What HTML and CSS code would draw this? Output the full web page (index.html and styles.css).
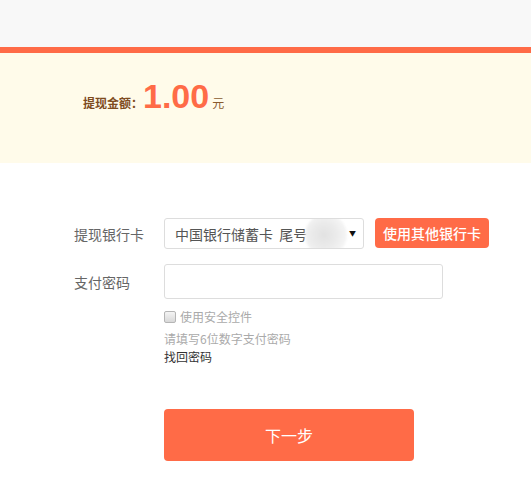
FILE: index.html
```html
<!DOCTYPE html>
<html lang="zh-CN">
<head>
<meta charset="utf-8">
<title>提现</title>
<link rel="stylesheet" href="styles.css">
</head>
<body>
<div class="top"></div>
<div class="bar"></div>
<section class="amount">
  <span class="amount-label">提现金额：</span>
  <span class="amount-num">1.00</span>
  <span class="amount-unit">元</span>
</section>
<section class="form">
  <div class="row row-card">
    <label class="label">提现银行卡</label>
    <div class="select">
      <span class="select-text">中国银行储蓄卡&nbsp;&nbsp;尾号</span>
      <span class="blur"></span>
      <span class="arrow">▼</span>
    </div>
    <button class="btn-other" type="button">使用其他银行卡</button>
  </div>
  <div class="row row-pwd">
    <label class="label">支付密码</label>
    <input class="pwd" type="password">
  </div>
  <div class="sub">
    <label class="check-line"><input class="check" type="checkbox"><span>使用安全控件</span></label>
    <div class="tip">请填写6位数字支付密码</div>
    <a class="find" href="#">找回密码</a>
    <button class="btn-next" type="button">下一步</button>
  </div>
</section>
</body>
</html>
```
FILE: styles.css
```css
html, body {
  margin: 0;
  padding: 0;
  background: #fff;
  font-family: "Noto Sans CJK SC", "Liberation Sans", sans-serif;
}
.top {
  height: 47px;
  background: #f8f8f8;
}
.bar {
  height: 6px;
  background: #ff6b47;
}
.amount {
  height: 110px;
  box-sizing: border-box;
  background: #fffbea;
  padding: 26px 0 0 83px;
  display: flex;
  align-items: baseline;
}
.amount-label {
  font-size: 12px;
  font-weight: bold;
  color: #7e4b1e;
  line-height: 34px;
}
.amount-num {
  font-family: "Liberation Sans", Arial, sans-serif;
  font-size: 34px;
  font-weight: bold;
  color: #ff6b47;
  line-height: 34px;
  margin-left: 0;
}
.amount-unit {
  font-size: 12px;
  color: #8a5a2e;
  margin-left: 3px;
  line-height: 34px;
}
.form {
  padding: 55px 0 0 74px;
}
.row {
  display: flex;
  align-items: center;
}
.label {
  width: 90px;
  font-size: 14px;
  color: #666;
  line-height: 20px;
}
.row-card {
  height: 31px;
}
.select {
  position: relative;
  width: 200px;
  height: 31px;
  box-sizing: border-box;
  border: 1px solid #ddd;
  border-radius: 3px;
  display: flex;
  align-items: center;
  padding-left: 10px;
  font-size: 14px;
  color: #555;
  overflow: hidden;
}
.select-text {
  white-space: nowrap;
  line-height: 20px;
}
.blur {
  position: absolute;
  left: 140px;
  top: -5px;
  width: 42px;
  height: 42px;
  border-radius: 50%;
  background: radial-gradient(circle at 45% 50%, #e2e2e2 0%, #ebebeb 40%, #f4f4f4 68%, #fbfbfb 100%);
  filter: blur(1px);
}
.arrow {
  position: absolute;
  right: 7px;
  top: 9px;
  font-size: 7px;
  color: #111;
  line-height: 10px;
}
.btn-other {
  margin-left: 11px;
  width: 114px;
  height: 30px;
  border: none;
  border-radius: 4px;
  background: #ff6b47;
  color: #fff;
  font-family: "Noto Sans CJK SC", sans-serif;
  font-size: 14px;
  font-weight: 500;
  padding: 0;
  margin-top: -1px;
}
.row-pwd {
  margin-top: 15px;
}
.pwd {
  width: 279px;
  height: 35px;
  box-sizing: border-box;
  border: 1px solid #ddd;
  border-radius: 3px;
  margin: 0;
  outline: none;
}
.sub {
  padding: 9px 0 0 90px;
  display: flex;
  flex-direction: column;
  align-items: flex-start;
  font-size: 12px;
}
.check-line {
  display: flex;
  align-items: center;
  height: 18px;
  color: #aaa;
  line-height: 18px;
}
.check {
  appearance: none;
  -webkit-appearance: none;
  width: 12px;
  height: 12px;
  margin: 0 4px 0 0;
  box-sizing: border-box;
  border: 1px solid #b5b5b5;
  border-radius: 2px;
  background: linear-gradient(#f4f4f4, #d8d8d8);
}
.tip {
  margin-top: 4px;
  color: #aaa;
  line-height: 18px;
}
.find {
  color: #333;
  text-decoration: none;
  line-height: 18px;
}
.btn-next {
  margin-top: 43px;
  width: 250px;
  height: 52px;
  border: none;
  border-radius: 4px;
  background: #ff6b47;
  color: #fff;
  font-family: "Noto Sans CJK SC", sans-serif;
  font-size: 16px;
  padding: 0;
}
```
